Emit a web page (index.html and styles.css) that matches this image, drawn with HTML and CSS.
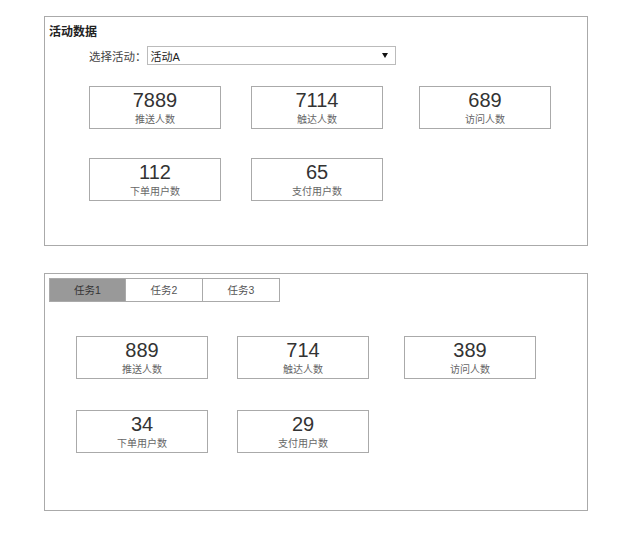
FILE: index.html
```html
<!DOCTYPE html>
<html lang="zh">
<head>
<meta charset="UTF-8">
<meta name="viewport" content="width=device-width, initial-scale=1.0">
<title>活动数据</title>
<link rel="stylesheet" href="styles.css">
</head>
<body>
<div class="panel panel-activity">
  <h2 class="panel-title">活动数据</h2>
  <div class="select-row">
    <span class="select-label">选择活动：</span>
    <div class="select">
      <span>活动A</span>
      <span class="arrow"></span>
    </div>
  </div>
  <div class="stats">
    <div class="stat"><div class="num">7889</div><div class="label">推送人数</div></div>
    <div class="stat"><div class="num">7114</div><div class="label">触达人数</div></div>
    <div class="stat"><div class="num">689</div><div class="label">访问人数</div></div>
    <div class="stat"><div class="num">112</div><div class="label">下单用户数</div></div>
    <div class="stat"><div class="num">65</div><div class="label">支付用户数</div></div>
  </div>
</div>

<div class="panel panel-task">
  <div class="tabs">
    <div class="tab active">任务1</div>
    <div class="tab">任务2</div>
    <div class="tab">任务3</div>
  </div>
  <div class="stats">
    <div class="stat"><div class="num">889</div><div class="label">推送人数</div></div>
    <div class="stat"><div class="num">714</div><div class="label">触达人数</div></div>
    <div class="stat"><div class="num">389</div><div class="label">访问人数</div></div>
    <div class="stat"><div class="num">34</div><div class="label">下单用户数</div></div>
    <div class="stat"><div class="num">29</div><div class="label">支付用户数</div></div>
  </div>
</div>
</body>
</html>
```

FILE: styles.css
```css
body {
  margin: 0;
  font-family: "Liberation Sans", "Noto Sans CJK SC", sans-serif;
  background-color: #fff;
  color: #333;
}

.panel {
  box-sizing: border-box;
  width: 544px;
  margin-left: 44px;
  border: 1px solid #aaa;
}

.panel-activity {
  margin-top: 16px;
  height: 230px;
  padding: 6px 4px 0;
}

.panel-task {
  margin-top: 27px;
  height: 238px;
  padding: 4px 4px 0;
}

.panel-title {
  margin: 0;
  font-size: 12px;
  line-height: 18px;
  font-weight: bold;
  color: #222;
}

.select-row {
  display: flex;
  align-items: center;
  margin-top: 5px;
  padding-left: 40px;
}

.select-label {
  font-size: 11.5px;
  color: #444;
}

.select {
  box-sizing: border-box;
  width: 249px;
  height: 19px;
  border: 1px solid #bbb;
  display: flex;
  align-items: center;
  justify-content: space-between;
  padding: 0 7px 0 3px;
  font-size: 11px;
  color: #222;
}

.arrow {
  width: 0;
  height: 0;
  border-left: 3px solid transparent;
  border-right: 3px solid transparent;
  border-top: 5px solid #111;
}

.stats {
  display: grid;
  grid-template-columns: 132px 132px 138px;
}

.panel-activity .stats {
  margin: 21px 0 0 40px;
  column-gap: 30px;
  row-gap: 29px;
}

.panel-task .stats {
  margin: 34px 0 0 27px;
  column-gap: 29px;
  row-gap: 31px;
}

.stat {
  box-sizing: border-box;
  width: 132px;
  height: 43px;
  border: 1px solid #aaa;
  padding-top: 2px;
  text-align: center;
}

.stat:nth-child(3) {
  justify-self: end;
}

.num {
  font-size: 20px;
  line-height: 22px;
  color: #333;
}

.label {
  margin-top: 2px;
  font-size: 10px;
  line-height: 14px;
  color: #666;
}

.tabs {
  display: flex;
}

.tab {
  box-sizing: border-box;
  width: 78px;
  height: 24px;
  border: 1px solid #aaa;
  margin-left: -1px;
  font-size: 10.5px;
  line-height: 22px;
  text-align: center;
  color: #555;
}

.tab:first-child {
  width: 77px;
  margin-left: 0;
}

.tab.active {
  background-color: #999;
  color: #333;
}
```
